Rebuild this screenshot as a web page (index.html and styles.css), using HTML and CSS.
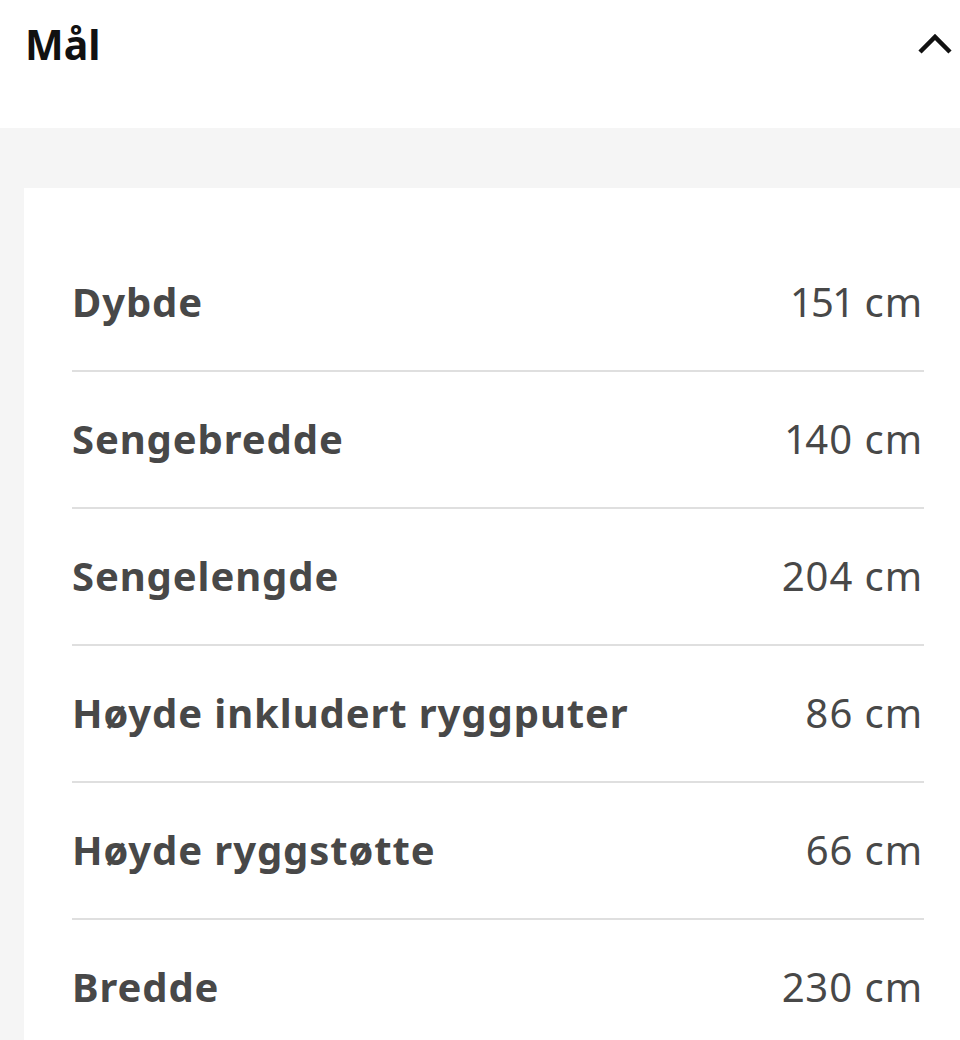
FILE: index.html
```html
<!DOCTYPE html>
<html lang="no">
<head>
<meta charset="utf-8">
<link rel="stylesheet" href="styles.css">
</head>
<body>
<header class="head">
  <h2 class="title">Mål</h2>
  <svg class="chev" width="36" height="24" viewBox="0 0 36 24"><path d="M3 20 L18 5 L33 20" fill="none" stroke="#111" stroke-width="4.5"/></svg>
</header>
<section class="band">
  <div class="card">
    <div class="row"><span class="lbl">Dybde</span><span class="val">151 cm</span></div>
    <div class="row"><span class="lbl">Sengebredde</span><span class="val">140 cm</span></div>
    <div class="row"><span class="lbl">Sengelengde</span><span class="val">204 cm</span></div>
    <div class="row"><span class="lbl">Høyde inkludert ryggputer</span><span class="val">86 cm</span></div>
    <div class="row"><span class="lbl">Høyde ryggstøtte</span><span class="val">66 cm</span></div>
    <div class="row"><span class="lbl">Bredde</span><span class="val">230 cm</span></div>
  </div>
</section>
</body>
</html>
```
FILE: styles.css
```css
html, body { margin: 0; padding: 0; }
body {
  font-family: "Noto Sans", "Open Sans", sans-serif;
  background: #f5f5f5;
  width: 960px;
  height: 1040px;
  overflow: hidden;
}
.head {
  height: 128px;
  background: #fff;
  display: flex;
  justify-content: space-between;
  align-items: flex-start;
  padding: 0 7px 0 25px;
  box-sizing: border-box;
}
.title {
  margin: 0;
  margin-top: 14px;
  font-size: 41px;
  font-weight: 700;
  color: #111;
  line-height: 60px;
}
.chev { margin-top: 32px; }
.band {
  padding: 60px 0 0 24px;
}
.card {
  background: #fff;
  padding: 47px 36px 0 48px;
  height: 805px;
  overflow: hidden;
}
.row {
  border-bottom: 2px solid #dfdfdf;
  display: flex;
  justify-content: space-between;
  align-items: center;
  color: #484848;
  line-height: 1;
  padding-bottom: 2px;
  box-sizing: border-box;
  height: 137px;
}
.lbl { font-weight: 700; font-size: 40px; letter-spacing: 0.9px; }
.val {
  font-weight: 400;
  font-size: 40px;
  letter-spacing: 0.9px;
  font-variant-numeric: proportional-nums;
  margin-right: 1px;
}
```
